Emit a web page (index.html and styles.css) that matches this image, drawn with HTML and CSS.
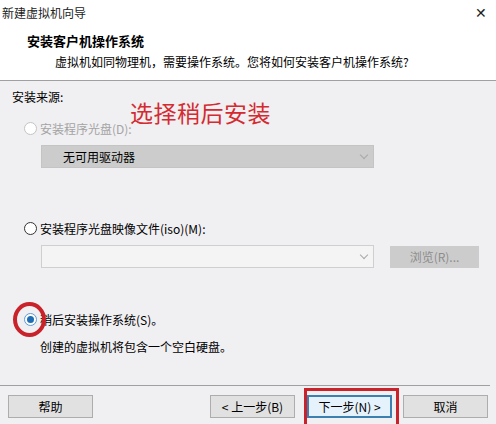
FILE: index.html
```html
<!DOCTYPE html>
<html lang="zh-CN">
<head>
    <meta charset="UTF-8">
    <title>新建虚拟机向导</title>
    <link rel="stylesheet" href="styles.css">
</head>
<body>
    <div class="window">
        <div class="titlebar">
            <span class="title">新建虚拟机向导</span>
            <span class="close">✕</span>
        </div>
        <div class="header">
            <div class="heading">安装客户机操作系统</div>
            <div class="subheading">虚拟机如同物理机，需要操作系统。您将如何安装客户机操作系统?</div>
        </div>

        <div class="content">
            <div class="source-label">安装来源:</div>
            <div class="note">选择稍后安装</div>

            <label class="option disabled option-first">
                <span class="radio"></span>安装程序光盘(D):
            </label>
            <div class="select disabled-select">
                <span>无可用驱动器</span>
                <span class="chevron"></span>
            </div>

            <label class="option option-second">
                <span class="radio"></span>安装程序光盘映像文件(iso)(M):
            </label>
            <div class="iso-row">
                <div class="select iso-select">
                    <span class="iso-field"></span>
                    <span class="chevron"></span>
                </div>
                <button class="btn browse" disabled>浏览(R)...</button>
            </div>

            <label class="option option-third">
                <span class="radio checked"></span>稍后安装操作系统(S)。
                <span class="ring"></span>
            </label>
            <div class="desc">创建的虚拟机将包含一个空白硬盘。</div>
        </div>

        <div class="footer">
            <button class="btn">帮助</button>
            <div class="nav">
                <button class="btn">&lt; 上一步(B)</button>
                <div class="next-wrap">
                    <button class="btn primary">下一步(N) &gt;</button>
                    <span class="mark"></span>
                </div>
                <button class="btn">取消</button>
            </div>
        </div>
    </div>
</body>
</html>
```

FILE: styles.css
```css
* {
    box-sizing: border-box;
}

body {
    margin: 0;
    font-family: "Noto Sans CJK SC", "Liberation Sans", sans-serif;
    font-size: 12px;
    color: #000;
    background: #f0eff2;
}

.window {
    width: 496px;
    height: 424px;
    position: relative;
    overflow: hidden;
}

.titlebar {
    height: 24px;
    background: #fff;
    display: flex;
    align-items: center;
    justify-content: space-between;
    padding: 0 9px 0 2px;
}

.title {
    font-size: 12px;
    color: #222;
}

.close {
    font-size: 14px;
    color: #222;
}

.header {
    height: 57px;
    background: #fff;
    padding: 8px 0 0 27px;
    border-bottom: 1px solid #a0a0a0;
}

.heading {
    font-weight: bold;
    font-size: 13px;
    line-height: 18px;
}

.subheading {
    margin: 3px 0 0 28px;
    font-size: 12px;
    line-height: 18px;
}

.content {
    height: 304px;
    padding: 7px 0 0 12px;
    position: relative;
}

.source-label {
    line-height: 18px;
}

.note {
    position: absolute;
    left: 130px;
    top: 16px;
    font-size: 23px;
    line-height: 30px;
    color: #d42a30;
    letter-spacing: 0.5px;
}

.option {
    display: flex;
    align-items: center;
    height: 18px;
    margin-left: 12px;
    position: relative;
}

.option-first {
    margin-top: 13px;
}

.option-second {
    margin-top: 51px;
}

.option-third {
    margin-top: 42px;
}

.option.disabled {
    color: #a4a4a4;
}

.radio {
    width: 13px;
    height: 13px;
    border: 1px solid #333;
    border-radius: 50%;
    background: #fff;
    margin-right: 3px;
    position: relative;
}

.disabled .radio {
    border-color: #c4c4c4;
}

.radio.checked {
    border-color: #5d9bd6;
}

.radio.checked::after {
    content: "";
    position: absolute;
    left: 2px;
    top: 2px;
    width: 7px;
    height: 7px;
    border-radius: 50%;
    background: #1f6db3;
}

.ring {
    position: absolute;
    left: -11px;
    top: -8px;
    width: 33px;
    height: 35px;
    border: 4px solid #c9222b;
    border-radius: 50%;
}

.select {
    height: 23px;
    width: 333px;
    margin: 8px 0 0 29px;
    display: flex;
    align-items: center;
    justify-content: space-between;
    padding: 0 6px 0 21px;
}

.disabled-select {
    background: #cccccc;
    border: 1px solid #c4c4c4;
}

.iso-row {
    display: flex;
    align-items: center;
    margin-top: 8px;
}

.iso-select {
    margin: 0 0 0 29px;
    background: #f4f4f4;
    border: 1px solid #cfcfcf;
    padding: 1px 6px 1px 1px;
}

.iso-field {
    width: 311px;
    height: 19px;
    background: #f4f4f4;
}

.chevron {
    width: 6px;
    height: 6px;
    border-right: 1px solid #a8a8a8;
    border-bottom: 1px solid #a8a8a8;
    transform: rotate(45deg);
    margin-top: -4px;
}

.btn {
    font-family: inherit;
    font-size: 12px;
    height: 23px;
    width: 85px;
    background: #e1e1e1;
    border: 1px solid #adadad;
    color: #000;
    padding: 0;
}

.browse {
    margin-left: 16px;
    width: 89px;
    height: 22px;
    background: #cccccc;
    border-color: #cccccc;
    color: #8c8c8c;
}

.desc {
    margin: 10px 0 0 28px;
    line-height: 18px;
}

.footer {
    border-top: 1px solid #a0a0a0;
    margin-right: 6px;
    height: 39px;
    display: flex;
    justify-content: space-between;
    padding: 9px 2px 0 8px;
}

.nav {
    display: flex;
    gap: 12px;
}

.next-wrap {
    position: relative;
    margin-right: -1px;
}

.primary {
    border: 2px solid #3c7fb1;
    background: #e5f1fb;
}

.mark {
    position: absolute;
    left: -3px;
    top: -7px;
    width: 95px;
    height: 40px;
    border: 3px solid #c9222b;
}
```
